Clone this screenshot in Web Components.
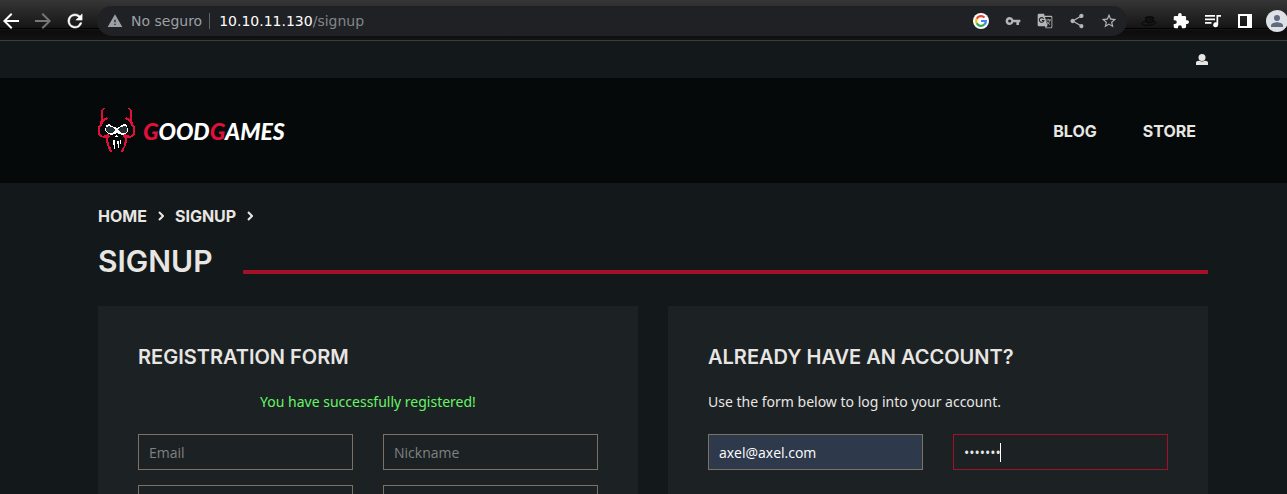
<!DOCTYPE html>
<html lang="es">
<head>
<meta charset="utf-8">
<title>GoodGames | Signup</title>
<style>
html, body { margin: 0; height: 100%; background: #13181b; }
body { font: 14px/24px "Noto Sans", "Open Sans", sans-serif; color: #e8e6e3; }
</style>
</head>
<body>
<gg-window>
  <gg-toolbar slot="chrome"></gg-toolbar>
  <gg-header></gg-header>
  <gg-title heading="Signup"></gg-title>
  <gg-columns>
    <gg-card heading="Registration Form">
      <gg-message>You have successfully registered!</gg-message>
      <gg-fields>
        <gg-field label="Email" type="email"></gg-field>
        <gg-field label="Nickname" type="text"></gg-field>
        <gg-field label="" name="Password" type="password"></gg-field>
        <gg-field label="" name="Repeat password" type="password"></gg-field>
      </gg-fields>
    </gg-card>
    <gg-card heading="Already have an account?">
      <p style="margin:0">Use the form below to log into your account.</p>
      <gg-fields>
        <gg-field label="Email" type="email" value="axel@axel.com" filled></gg-field>
        <gg-field label="Password" type="password" value="1234567" active></gg-field>
      </gg-fields>
    </gg-card>
  </gg-columns>
</gg-window>

<script>
const define = (name, html, init) => customElements.define(name, class extends HTMLElement {
  constructor() {
    super();
    const t = document.createElement('template');
    t.innerHTML = html;
    this.attachShadow({ mode: 'open' }).append(t.content.cloneNode(true));
  }
  connectedCallback() { if (init) init(this, this.shadowRoot); }
});

define('gg-window', `
<style>
:host { display: flex; flex-direction: column; height: 100vh; overflow: hidden; }
main { flex: 1; min-height: 0; overflow: hidden; --left: 98px; --right: 79px; }
</style>
<slot name="chrome"></slot><main><slot></slot></main>`);

define('gg-toolbar', `
<style>
:host { display: block; flex: none; font: 14px/20px "DejaVu Sans", sans-serif; }
nav { display: flex; align-items: center; height: 40px; padding-top: 2px; box-sizing: border-box;
  box-shadow: 0 1px #3c3c3c; margin-bottom: 1px;
  background: linear-gradient(#363636, #151515 28px, #000 28px, #000 29px, #1f1f1f 29px, #0c0c0c 30px, #121212); }
button { display: grid; place-items: center; flex: none; padding: 0; border: 0; background: none; width: 16px; height: 16px; color: #fff; }
svg { width: 16px; height: 16px; fill: currentColor; display: block; }
.move { display: flex; gap: 16px; padding-left: 3px; margin-right: 14px; }
.move button:nth-child(2) { color: #777; }
.bar { display: flex; flex: 1; min-width: 0; align-items: center; height: 30px; border-radius: 15px; background: #202124; color: #9aa0a6; padding: 0 10px; }
.warn { flex: none; margin-right: 8px; }
.sep { width: 1px; height: 16px; background: #5f6368; margin: 0 9px 0 7px; }
.url { flex: 1; white-space: nowrap; color: #80868b; } b { font-weight: 400; color: #fff; }
.tools { display: flex; gap: 16px; } .tools button { color: #b5b5b5; }
.ext { display: flex; gap: 16px; padding-left: 14px; align-items: center; }
.ext .avatar { width: 22px; height: 22px; margin: 0 -1px 0 -3px; } .avatar svg { width: 22px; height: 22px; }
</style>
<nav aria-label="Browser">
  <div class="move">
    <button aria-label="Back"><svg viewBox="4 4 16 16"><path d="M20 11H7.83l5.59-5.59L12 4l-8 8 8 8 1.41-1.41L7.83 13H20z"/></svg></button>
    <button aria-label="Forward"><svg viewBox="4 4 16 16"><path d="M12 4l-1.41 1.41L16.17 11H4v2h12.17l-5.58 5.59L12 20l8-8z"/></svg></button>
    <button aria-label="Reload"><svg viewBox="3 3 18 18"><path d="M17.65 6.35A7.96 7.96 0 0 0 12 4a8 8 0 1 0 7.73 10h-2.08A6 6 0 1 1 12 6c1.66 0 3.14.69 4.22 1.78L13 11h7V4z" stroke="currentColor" stroke-width=".6"/></svg></button>
  </div>
  <div class="bar">
    <svg class="warn" viewBox="0 0 24 24"><path d="M1 21h22L12 2zm12-3h-2v-2h2zm0-4h-2v-4h2z"/></svg>
    <span>No seguro</span><span class="sep"></span>
    <span class="url"><b>10.10.11.130</b>/signup</span>
    <div class="tools">
      <button aria-label="Google"><svg viewBox="0 0 16 16"><circle cx="8" cy="8" r="8" fill="#fff"/><g fill="none" stroke-width="2.2"><path d="M11.5 4.6A4.9 4.9 0 0 0 3.7 5.7" stroke="#ea4335"/><path d="M3.7 5.7a4.9 4.9 0 0 0 0 4.6" stroke="#fbbc05"/><path d="M3.7 10.3a4.9 4.9 0 0 0 7.5 1.4" stroke="#34a853"/><path d="M11.2 11.7A4.9 4.9 0 0 0 12.9 8H8" stroke="#4285f4"/></g></svg></button>
      <button aria-label="Passwords"><svg viewBox="0 0 24 24"><path d="M12.65 10A6 6 0 0 0 7 6a6 6 0 1 0 5.65 8H17v4h4v-4h2v-4zM7 14.4a2.4 2.4 0 1 1 0-4.8 2.4 2.4 0 0 1 0 4.8z"/></svg></button>
      <button aria-label="Translate"><svg viewBox="0 0 24 24"><path fill-rule="evenodd" d="M3 1h7.500l.9 3H21a2 2 0 0 1 2 2v15a2 2 0 0 1-2 2h-8l-1-3H3a2 2 0 0 1-2-2V3a2 2 0 0 1 2-2zm9 5 3.800 13-2.400 2.600H21a.7.7 0 0 0 .7-.7V6.700A.7.7 0 0 0 21 6z"/><path d="M10 8.600A3.500 3.500 0 1 0 10.400 11.200H7.400" fill="none" stroke="#202124" stroke-width="1.600"/><path d="M13.500 10.500H21M17 9v1.500M19.500 10.500C18.500 14 16.500 16 15 17M14.800 12.500c1 2 3 4 4.700 5" fill="none" stroke="currentColor" stroke-width="1.300"/></svg></button>
      <button aria-label="Share"><svg viewBox="1 1 22 22"><path d="M18 16.080c-.76 0-1.440.3-1.960.77L8.910 12.700a3.300 3.300 0 0 0 0-1.400l7.050-4.110A3 3 0 1 0 15 5c0 .24.04.47.09.7L8.040 9.810a3 3 0 1 0 0 4.380l7.120 4.160A2.900 2.900 0 1 0 18 16.080z"/></svg></button>
      <button aria-label="Bookmark"><svg viewBox="1 1 22 22"><path d="m22 9.240-7.190-.62L12 2 9.190 8.630 2 9.240l5.460 4.730L5.820 21 12 17.270 18.180 21l-1.630-7.030zM12 15.400l-3.760 2.270 1-4.280-3.320-2.880 4.380-.38L12 6.100l1.710 4.040 4.380.38-3.320 2.880 1 4.280z"/></svg></button>
    </div>
  </div>
  <div class="ext">
    <button aria-label="Hat extension"><svg viewBox="0 0 16 16"><path d="M4.500 4.500c2-1 6-1 8 0l-.5 4.500C10 10 7 10 5 9z" fill="#111" stroke="#050505"/><path d="M4 8.500C1 9 0 10.500 1.500 11.500c3 1.500 10 1 13-1.500 1-1-.5-2-2-1.500" fill="none" stroke="#050505"/></svg></button>
    <button aria-label="Extensions"><svg viewBox="1 1 22 22"><path d="M20.500 11H19V7a2 2 0 0 0-2-2h-4V3.500a2.500 2.500 0 0 0-5 0V5H4a2 2 0 0 0-2 2v3.800h1.500a2.700 2.700 0 0 1 0 5.400H2V20c0 1.100.9 2 2 2h3.800v-1.500a2.700 2.700 0 0 1 5.400 0V22H17a2 2 0 0 0 2-2v-4h1.500a2.500 2.500 0 0 0 0-5z"/></svg></button>
    <button aria-label="Media"><svg viewBox="0 0 16 16"><path d="M0 2h10v1.700H0zM0 5.500h10v1.700H0zM0 9h6.500v1.700H0zM11.500 2H16v1.800h-2.800v8a2.500 2.500 0 1 1-1.700-2.400z"/></svg></button>
    <button aria-label="Side panel"><svg viewBox="0 0 16 16"><path fill-rule="evenodd" d="M1 1h14v14H1zm2 2v10h7V3z"/></svg></button>
    <button class="avatar" aria-label="Profile"><svg viewBox="0 0 22 22"><circle cx="11" cy="11" r="11" fill="#dee1e6"/><g fill="#5f6a80"><circle cx="11" cy="8" r="3"/><path d="M5 17v-1.500c0-2 4-3.200 6-3.200s6 1.200 6 3.200V17z"/></g></svg></button>
  </div>
</nav>`);

define('gg-logo', `
<style>
:host { display: block; }
a { display: flex; align-items: center; gap: 7px; color: #fff; text-decoration: none; font: italic 900 23px/28px Lato, sans-serif; }
svg { width: 38px; height: 46px; display: block; }
em { color: #e0103a; }
</style>
<a href="#home">
<svg viewBox="0 0 38 46" aria-hidden="true" shape-rendering="crispEdges">
<defs><g id="half">
<path fill="#e0103a" d="M7 0H5L3 3v8l-1 5-2 3v8l3 2 3 1 5-1-1-2-5 1-3-2v-6l2-3 2-4 4-2-1-2-4 2V8L5 3z"/>
<path fill="#e0103a" d="M5 28l3 1v4l1 4 3 7h2l-1-4-2-2-1-8 2-1-1-3-4 1z"/>
<path fill="#fff" d="M8 17l3-1 5 3 3 1v5l-3 1-3 1-3-1-3-3z"/>
<path fill="#252f33" d="M8 19l3-1 5 2 1 2-3 3H10l-2-2z"/>
</g></defs>
<use href="#half"/><use href="#half" transform="matrix(-1 0 0 1 37 0)"/>
<path fill="#fff" d="M18 27h1l1 2h-3zM15 32h2v9h-1v-4h-1zM19 33h2v7h-1v-4h-1zM22 32h1v4h-1z"/>
</svg><span><em>G</em>OOD<em>G</em>AMES</span></a>`);

define('gg-header', `
<style>
:host { display: block; }
.top, .main { display: flex; align-items: center; padding: 0 var(--right) 0 var(--left); }
.top { height: 37px; justify-content: flex-end; }
.top button { border: 0; background: none; padding: 0; color: #e8e6e3; }
.top svg { display: block; width: 12px; height: 12px; fill: currentColor; }
.main { min-height: 105px; background: #050909; justify-content: space-between; }
nav { display: flex; gap: 46px; padding-right: 12px; }
nav a { color: #e8e6e3; text-decoration: none; font: 700 16px/24px Inter, sans-serif; }
</style>
<div class="top"><button aria-label="Account"><svg viewBox="0 0 12 12"><circle cx="6" cy="3.500" r="3.500"/><path d="M0 11V9c0-1.500 1-2 3-2.200 2 1 4 1 6 0C11 7 12 7.500 12 9v2z"/></svg></button></div>
<div class="main"><gg-logo></gg-logo><nav><a href="#blog">BLOG</a><a href="#store">STORE</a></nav></div>`);

define('gg-title', `
<style>
:host { display: block; padding: 21px var(--right) 0 var(--left); font-family: Inter, sans-serif; }
nav { display: flex; align-items: center; gap: 11px; font-size: 16px; font-weight: 700; line-height: 24px; }
a { color: inherit; text-decoration: none; }
svg { width: 6px; height: 10px; fill: none; stroke: currentColor; stroke-width: 2; }
.row { display: flex; align-items: flex-end; gap: 30px; margin-top: 15px; }
h1 { margin: 0; font-size: 30px; line-height: 36px; font-weight: 600; text-transform: uppercase; }
i { flex: 1; height: 4px; background: #a51029; margin-bottom: 5px; }
</style>
<nav aria-label="Breadcrumb"><a href="#home">HOME</a><svg viewBox="0 0 6 10"><path d="M1 1l4 4-4 4"/></svg><a href="#signup">SIGNUP</a><svg viewBox="0 0 6 10"><path d="M1 1l4 4-4 4"/></svg></nav>
<div class="row"><h1></h1><i></i></div>`,
(el, root) => { root.querySelector('h1').textContent = el.getAttribute('heading'); });

define('gg-columns', `
<style>:host { display: grid; grid-template-columns: 1fr 1fr; gap: 30px; padding: 27px var(--right) 40px var(--left); }</style><slot></slot>`);

define('gg-card', `
<style>
:host { display: block; background: #1c2124; padding: 40px 40px 80px; }
h2 { margin: 0 0 22px; font: 600 20px/22px Inter, sans-serif; text-transform: uppercase; }
</style><h2></h2><slot></slot>`,
(el, root) => { root.querySelector('h2').textContent = el.getAttribute('heading'); });

define('gg-message', `<style>:host { display: block; text-align: center; color: #66f466; }</style><slot></slot>`);

define('gg-fields', `
<style>form { display: grid; grid-template-columns: 1fr 1fr; gap: 15px 30px; margin-top: 20px; }</style><form><slot></slot></form>`);

define('gg-field', `
<style>
:host { display: block; position: relative; }
input { display: block; width: 100%; height: 36px; box-sizing: border-box; border: 1px solid #7b7264; border-radius: 0; outline: 0; background: transparent; color: #e8e6e3; font: 14px/20px "Open Sans", "Noto Sans", sans-serif; padding: 0 10px; }
input::placeholder { color: #7f8182; opacity: 1; }
:host([filled]) input { background: #2e394b; color: #fff; }
:host([active]) input { border-color: #a51029; }
.caret { display: none; position: absolute; left: 47px; top: 9px; width: 1px; height: 19px; background: #fff; }
:host([active]) .caret { display: block; }
</style>
<input><span class="caret"></span>`,
(el, root) => {
  const input = root.querySelector('input');
  input.type = el.getAttribute('type');
  input.placeholder = el.getAttribute('label');
  input.setAttribute('aria-label', el.getAttribute('name') || el.getAttribute('label'));
  input.value = el.getAttribute('value') || '';
});
</script>
</body>
</html>
